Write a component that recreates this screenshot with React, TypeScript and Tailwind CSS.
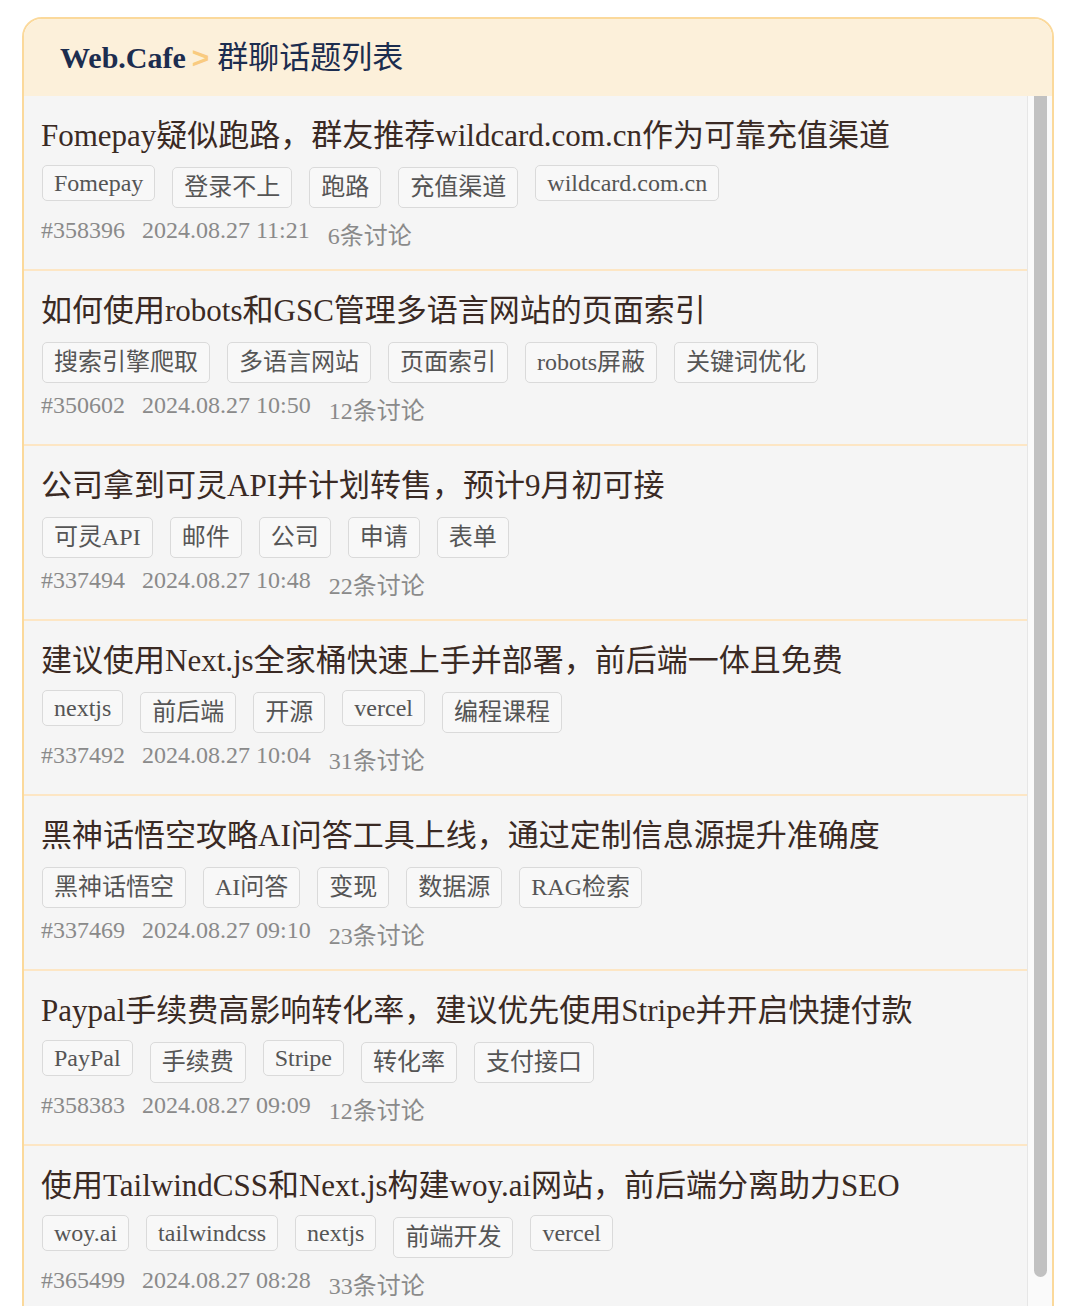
type Topic = {
  title: string;
  tags: string[];
  id: string;
  time: string;
  count: number;
};

const topics: Topic[] = [
  {
    title: "Fomepay疑似跑路，群友推荐wildcard.com.cn作为可靠充值渠道",
    tags: ["Fomepay", "登录不上", "跑路", "充值渠道", "wildcard.com.cn"],
    id: "358396",
    time: "2024.08.27 11:21",
    count: 6,
  },
  {
    title: "如何使用robots和GSC管理多语言网站的页面索引",
    tags: ["搜索引擎爬取", "多语言网站", "页面索引", "robots屏蔽", "关键词优化"],
    id: "350602",
    time: "2024.08.27 10:50",
    count: 12,
  },
  {
    title: "公司拿到可灵API并计划转售，预计9月初可接",
    tags: ["可灵API", "邮件", "公司", "申请", "表单"],
    id: "337494",
    time: "2024.08.27 10:48",
    count: 22,
  },
  {
    title: "建议使用Next.js全家桶快速上手并部署，前后端一体且免费",
    tags: ["nextjs", "前后端", "开源", "vercel", "编程课程"],
    id: "337492",
    time: "2024.08.27 10:04",
    count: 31,
  },
  {
    title: "黑神话悟空攻略AI问答工具上线，通过定制信息源提升准确度",
    tags: ["黑神话悟空", "AI问答", "变现", "数据源", "RAG检索"],
    id: "337469",
    time: "2024.08.27 09:10",
    count: 23,
  },
  {
    title: "Paypal手续费高影响转化率，建议优先使用Stripe并开启快捷付款",
    tags: ["PayPal", "手续费", "Stripe", "转化率", "支付接口"],
    id: "358383",
    time: "2024.08.27 09:09",
    count: 12,
  },
  {
    title: "使用TailwindCSS和Next.js构建woy.ai网站，前后端分离助力SEO",
    tags: ["woy.ai", "tailwindcss", "nextjs", "前端开发", "vercel"],
    id: "365499",
    time: "2024.08.27 08:28",
    count: 33,
  },
];

const font = {
  fontFamily: '"Liberation Serif", "Noto Sans CJK SC", serif',
};

const hasCjk = (s: string) => /[\u3400-\u9fff]/.test(s);

export default function App() {
  return (
    <div
      className="h-[1306px] w-[1080px] overflow-hidden bg-white pl-[22px] pr-[26px] pt-[17px]"
      style={font}
    >
      <section className="overflow-hidden rounded-t-[20px] border-2 border-[#fbd99b]">
        <div className="flex items-center bg-[#fcf0da] pb-[18px] pl-[36px] pt-[19px] text-[30px] leading-[40px] text-[#1c2d4f]">
          <span className="font-bold">Web.Cafe</span>
          <span className="ml-[6px] mr-[8px] font-['Liberation_Sans'] text-[30px] font-bold text-[#f9cb80]">
            &gt;
          </span>
          <span className="text-[31px]">群聊话题列表</span>
        </div>

        <div className="flex">
          <div className="flex-1 bg-[#f5f5f5]">
            {topics.map((topic) => (
              <TopicRow key={topic.id} topic={topic} />
            ))}
          </div>

          {/* scrollbar */}
          <div className="w-[25px] shrink-0 border-l border-[#e6e6e6] bg-[#fafafa] pl-[6px]">
            <div className="h-[1181px] w-[13px] rounded-b-[7px] bg-[#c1c1c1]" />
          </div>
        </div>
      </section>
    </div>
  );
}

function TopicRow({ topic }: { topic: Topic }) {
  return (
    <div className="border-b-2 border-[#fde6c4] pb-[18px] pl-[17px] pt-[20px]">
      <h3 className="mb-[9px] whitespace-nowrap text-[31px] leading-[40px] text-[#3a2a24]">
        {topic.title}
      </h3>

      <div className="flex items-start gap-[17px] pl-[1px]">
        {topic.tags.map((tag) => (
          <span
            key={tag}
            className={
              hasCjk(tag)
                ? "mt-[2px] h-[41px] rounded-[5px] border border-[#dadada] bg-[#f8f8f8] px-[11px] text-[24px] leading-[39px] text-[#555555]"
                : "h-[36px] rounded-[5px] border border-[#dadada] bg-[#f8f8f8] px-[11px] text-[24px] leading-[34px] text-[#555555]"
            }
          >
            {tag}
          </span>
        ))}
      </div>

      <div className="mt-[7px] flex items-start text-[24px] leading-[30px] text-[#8a8a8a]">
        <span>#{topic.id}</span>
        <span className="ml-[17px]">{topic.time}</span>
        <span className="ml-[18px] mt-[6px]">{topic.count}条讨论</span>
      </div>
    </div>
  );
}
